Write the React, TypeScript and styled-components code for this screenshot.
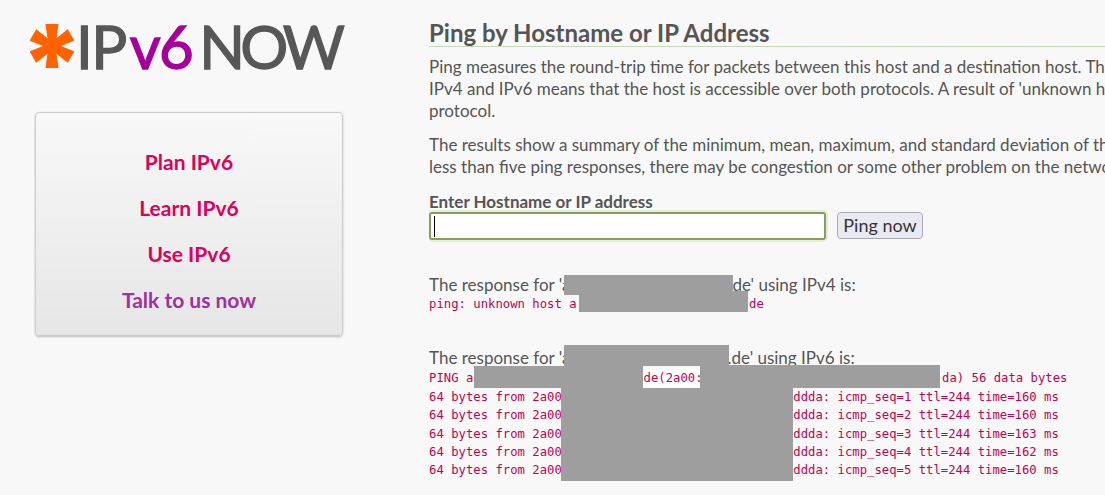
import React, { FC } from 'react';
import styled, { createGlobalStyle } from 'styled-components';

const GlobalStyle = createGlobalStyle`
  html, body {
    margin: 0;
    height: 100%;
    overflow: hidden;
    background: #f8f8f8;
  }
  body {
    font-family: 'Lato', 'Open Sans', sans-serif;
    color: #555;
  }
`;

const Page = styled.div`
  display: flex;
  width: 1105px;
  height: 495px;
  overflow: hidden;
`;

const Sidebar = styled.aside`
  flex: none;
  width: 429px;
  padding: 18px 0 0 30px;
  box-sizing: border-box;
`;

const Logo = styled.div`
  display: flex;
  align-items: center;
  height: 56px;
  font-size: 60px;
  line-height: 56px;
  letter-spacing: -1.6px;
  -webkit-text-stroke: 1.3px #575757;
  color: #575757;
  white-space: nowrap;

  > svg {
    flex: none;
    margin-right: 2px;
  }
`;

const LogoAccent = styled.span`
  color: #a6009a;
  -webkit-text-stroke: 1.3px #a6009a;
  margin: 0 7px 0 4px;
`;

const LogoNow = styled.span`
  letter-spacing: -4.8px;
`;

const NavCard = styled.nav`
  display: flex;
  flex-direction: column;
  align-items: center;
  gap: 18px;
  box-sizing: border-box;
  width: 308px;
  height: 224px;
  margin: 38px 0 0 5px;
  padding: 35px 0 0;
  border: 1px solid #ccc;
  border-radius: 4px;
  background: linear-gradient(#f8f8f8, #e6e6e6);
  box-shadow: 0 1px 2px rgba(0, 0, 0, 0.25);
`;

const NavLink = styled.a<{ $talk?: boolean }>`
  font-size: 21px;
  line-height: 28px;
  font-weight: 700;
  color: ${(p) => (p.$talk ? '#a0309f' : '#e0005a')};
  text-decoration: none;
`;

const Main = styled.main`
  position: relative;
  flex: none;
  width: 676px;
  padding-top: 19px;
  box-sizing: border-box;
  white-space: nowrap;
  overflow: hidden;
`;

const Heading = styled.h1`
  margin: 0;
  height: 27px;
  font-size: 24px;
  line-height: 28px;
  font-weight: 700;
  color: #555;
  border-bottom: 1px solid #c6dab8;
`;

const Text = styled.p`
  margin: 9px 0 0;
  font-size: 17px;
  line-height: 22px;
  color: #555;

  & + & {
    margin-top: 12px;
  }
`;

const Form = styled.form`
  margin-top: 15px;
`;

const Label = styled.label`
  display: block;
  font-size: 17px;
  line-height: 18px;
  font-weight: 700;
  color: #555;
`;

const FieldRow = styled.div`
  display: flex;
  align-items: flex-start;
  gap: 11px;
  margin-top: 1px;
`;

const HostInput = styled.div`
  box-sizing: border-box;
  display: flex;
  align-items: center;
  width: 397px;
  height: 28px;
  padding-left: 3px;
  background: #fff;
  border: 2px solid #86a058;
  border-radius: 3px;
  box-shadow: 0 0 0 2px #e4eeda;

  &::before {
    content: '';
    width: 1px;
    height: 21px;
    background: #000;
  }
`;

const PingButton = styled.button`
  box-sizing: border-box;
  width: 86px;
  height: 27px;
  padding: 0 0 2px;
  font-family: 'Lato', sans-serif;
  font-size: 18px;
  color: #333;
  background: #e9e9f2;
  border: 1px solid #a9a9b4;
  border-radius: 4px;
`;

const Response = styled.section`
  margin-top: 34px;

  & + & {
    margin-top: 34px;
  }
`;

const ResponseTitle = styled.div`
  font-size: 17px;
  line-height: 22px;
  color: #555;
`;

const Output = styled.pre<{ $tight?: boolean }>`
  margin: ${(p) => (p.$tight ? '-1px' : '0')} 0 0;
  font-family: 'DejaVu Sans Mono', monospace;
  font-size: 12.25px;
  line-height: 18.4px;
  color: #c7004f;
`;

const Blank = styled.span<{ $w: number }>`
  display: inline-block;
  width: ${(p) => p.$w}px;
`;

const Highlight = styled.span`
  padding: 3px 2px;
  margin: 0 -2px;
  background: #fff;
`;

const Redaction = styled.div<{ $x: number; $y: number; $w: number; $h: number }>`
  position: absolute;
  left: ${(p) => p.$x - 429}px;
  top: ${(p) => p.$y}px;
  width: ${(p) => p.$w}px;
  height: ${(p) => p.$h}px;
  background: #9e9e9e;
`;

const Star: FC = () => (
  <svg width="44" height="44" viewBox="-22 -22 44 44">
    <g fill="#ff6200">
      {[0, 60, 120, 180, 240, 300].map((angle) => (
        <polygon key={angle} points="-6.5,-22 6.5,-22 3.5,0 -3.5,0" transform={`rotate(${angle})`} />
      ))}
    </g>
  </svg>
);

const PingLine: FC<{ rest: string }> = ({ rest }) => (
  <>
    64 bytes from 2a00
    <Blank $w={231.6} />
    {rest}
    {'\n'}
  </>
);

export default function App() {
  return (
    <Page>
      <GlobalStyle />
      <Sidebar>
        <Logo>
          <Star />
          IP<LogoAccent>v6</LogoAccent><LogoNow>NOW</LogoNow>
        </Logo>
        <NavCard>
          <NavLink href="#">Plan IPv6</NavLink>
          <NavLink href="#">Learn IPv6</NavLink>
          <NavLink href="#">Use IPv6</NavLink>
          <NavLink href="#" $talk>Talk to us now</NavLink>
        </NavCard>
      </Sidebar>
      <Main>
        <Heading>Ping by Hostname or IP Address</Heading>
        <Text>
          Ping measures the round-trip time for packets between this host and a destination host. This test
          <br />
          IPv4 and IPv6 means that the host is accessible over both protocols. A result of 'unknown host' means
          <br />
          protocol.
        </Text>
        <Text>
          The results show a summary of the minimum, mean, maximum, and standard deviation of the round-trip
          <br />
          less than five ping responses, there may be congestion or some other problem on the network
        </Text>
        <Form>
          <Label>Enter Hostname or IP address</Label>
          <FieldRow>
            <HostInput />
            <PingButton type="button">Ping now</PingButton>
          </FieldRow>
        </Form>
        <Response>
          <ResponseTitle>
            The response for 'a
            <Blank $w={158} />
            .de' using IPv4 is:
          </ResponseTitle>
          <Output $tight>
            ping: unknown host a
            <Blank $w={172.6} />
            de
          </Output>
        </Response>
        <Response>
          <ResponseTitle>
            The response for 'a
            <Blank $w={153} />
            l.de' using IPv6 is:
          </ResponseTitle>
          <Output>
            PING a
            <Blank $w={170.3} />
            <Highlight>de(2a00:</Highlight>
            <Blank $w={239.5} />
            da) 56 data bytes
            {'\n'}
            <PingLine rest="ddda: icmp_seq=1 ttl=244 time=160 ms" />
            <PingLine rest="ddda: icmp_seq=2 ttl=244 time=160 ms" />
            <PingLine rest="ddda: icmp_seq=3 ttl=244 time=163 ms" />
            <PingLine rest="ddda: icmp_seq=4 ttl=244 time=162 ms" />
            <PingLine rest="ddda: icmp_seq=5 ttl=244 time=160 ms" />
          </Output>
        </Response>
        <Redaction $x={564} $y={275} $w={169} $h={20} />
        <Redaction $x={579} $y={291} $w={169} $h={21} />
        <Redaction $x={564} $y={345} $w={165} $h={21} />
        <Redaction $x={474} $y={366} $w={169} $h={22} />
        <Redaction $x={700} $y={365} $w={240} $h={23} />
        <Redaction $x={561} $y={388} $w={232} $h={93} />
      </Main>
    </Page>
  );
}
